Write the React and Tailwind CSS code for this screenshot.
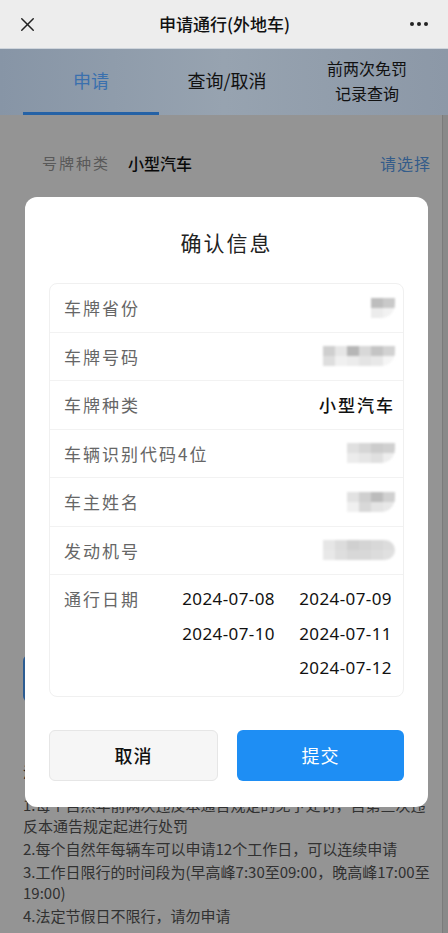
import { X } from "lucide-react";

const font = { fontFamily: '"Noto Sans CJK SC", "Noto Sans", sans-serif' };

const Mosaic = ({ top, bottom, round }) => (
  <div className={`flex flex-col blur-[1.2px] overflow-hidden ${round ? "rounded-r-full" : "rounded-br-[14px]"}`}>
    <div className="flex">
      {top.map((c, i) => (
        <div key={i} className="h-[10px] w-[12px]" style={{ backgroundColor: c }} />
      ))}
    </div>
    <div className="flex">
      {bottom.map((c, i) => (
        <div key={i} className="h-[10px] w-[12px]" style={{ backgroundColor: c }} />
      ))}
    </div>
  </div>
);

const rows = [
  {
    label: "车牌省份",
    mosaic: { top: ["#bdbdbd", "#c9c9c9"], bottom: ["#ececec", "#f2f2f2"] },
  },
  {
    label: "车牌号码",
    mosaic: {
      top: ["#cfcfcf", "#e6e6e6", "#b6b6b6", "#d8d8d8", "#c4c4c4", "#d2d2d2"],
      bottom: ["#dedede", "#f0f0f0", "#ececec", "#e4e4e4", "#e8e8e8", "#f5f5f5"],
    },
  },
  { label: "车牌种类", value: "小型汽车" },
  {
    label: "车辆识别代码4位",
    mosaic: {
      top: ["#e0e0e0", "#d6d6d6", "#cccccc", "#d0d0d0"],
      bottom: ["#ececec", "#e6e6e6", "#e0e0e0", "#eeeeee"],
    },
  },
  {
    label: "车主姓名",
    mosaic: {
      top: ["#e2e2e2", "#cfcfcf", "#bcbcbc", "#d0d0d0"],
      bottom: ["#f0f0f0", "#d8d8d8", "#e4e4e4", "#e8e8e8"],
    },
  },
  {
    label: "发动机号",
    round: true,
    mosaic: {
      top: ["#e6e6e6", "#dcdcdc", "#d0d0d0", "#d4d4d4", "#d8d8d8", "#dcdcdc"],
      bottom: ["#e8e8e8", "#dedede", "#d8d8d8", "#d8d8d8", "#dcdcdc", "#e0e0e0"],
    },
  },
];

const dates = ["2024-07-08", "2024-07-09", "2024-07-10", "2024-07-11", "2024-07-12"];

const notes = [
  "1.每个自然年前两次违反本通告规定的免予处罚，自第三次违反本通告规定起进行处罚",
  "2.每个自然年每辆车可以申请12个工作日，可以连续申请",
  "3.工作日限行的时间段为(早高峰7:30至09:00，晚高峰17:00至19:00)",
  "4.法定节假日不限行，请勿申请",
];

const ConfirmModal = () => (
  <div className="fixed left-[25px] top-[197px] z-10 w-[403px] rounded-[12px] bg-white px-6 pb-[26px] pt-[30px]">
    <h2 className="text-center text-[21px] leading-[30px] tracking-[2px] text-[#222]">确认信息</h2>
    <div className="mt-[26px] rounded-[8px] border border-[#f0f0f0]">
      {rows.map((r) => (
        <div
          key={r.label}
          className="flex h-[48.5px] items-center justify-between border-b border-[#f2f2f2] pl-[14px] pr-[8px]"
        >
          <span className="text-[17px] tracking-[2px] text-[#666]">{r.label}</span>
          {r.value ? (
            <span className="text-[17px] font-medium tracking-[2px] text-[#111]">{r.value}</span>
          ) : (
            <Mosaic {...r.mosaic} round={r.round} />
          )}
        </div>
      ))}
      {/* dates */}
      <div className="flex justify-between pb-[10px] pl-[14px] pr-[11px] pt-[7px]">
        <span className="text-[17px] leading-[34.5px] tracking-[2px] text-[#666]">通行日期</span>
        <div
          className="grid grid-cols-[94px_94px] gap-x-[23px] text-right text-[17px] leading-[34.5px] tracking-[0.4px] text-[#111]"
          style={{ fontFamily: '"Noto Sans", "Open Sans", sans-serif' }}
        >
          {dates.map((d, i) => (
            <span key={d} className={i === 4 ? "col-start-2" : ""}>
              {d}
            </span>
          ))}
        </div>
      </div>
    </div>
    <div className="mt-[33px] flex gap-[19px]">
      <button className="h-[51px] flex-1 rounded-[6px] border border-[#e6e6e6] bg-[#f6f6f6] text-[18px] font-medium tracking-[1px] text-[#111]">
        取消
      </button>
      <button className="h-[51px] flex-1 rounded-[6px] bg-[#1e8ef4] text-[18px] tracking-[1px] text-white">
        提交
      </button>
    </div>
  </div>
);

export default function App() {
  return (
    <div className="flex min-h-[933px] flex-col bg-white" style={font}>
      {/* top bar */}
      <div className="flex h-12 items-center justify-between bg-[#ededed] px-[16px]">
        <X size={23} strokeWidth={1.5} className="text-[#222]" />
        <span className="text-[17px] font-medium text-[#111]">申请通行(外地车)</span>
        <div className="flex gap-[3px] pr-[4px]">
          <span className="h-[4px] w-[4px] rounded-full bg-[#222]" />
          <span className="h-[4px] w-[4px] rounded-full bg-[#222]" />
          <span className="h-[4px] w-[4px] rounded-full bg-[#222]" />
        </div>
      </div>

      {/* tabs */}
      <div className="grid h-[67px] grid-cols-3 border-t border-[#cfd5dc] bg-gradient-to-r from-[#8795a6] via-[#97a3b0] to-[#8c98a7] pl-[23px] pr-[17px]">
        <div className="flex flex-col">
          <div className="flex flex-1 items-center justify-center text-[18px] text-[#3a70ae]">申请</div>
          <div className="h-[3px] bg-[#2562a6]" />
        </div>
        <div className="flex items-center justify-center pb-[3px] text-[18px] text-[#111]">查询/取消</div>
        <div className="flex flex-col items-center justify-center pb-[3px] pl-[8px] text-[16px] leading-[25px] text-[#111]">
          <span>前两次免罚</span>
          <span>记录查询</span>
        </div>
      </div>

      {/* content under mask */}
      <div className="relative flex flex-1">
        <div className="flex-1 pb-4 pt-[24px]">
          <div className="flex h-12 items-center pl-[42px] pr-[11px]">
            <span className="w-[86px] text-[15px] tracking-[2px] text-[#999]">号牌种类</span>
            <span className="flex-1 text-[16px] font-medium text-[#111]">小型汽车</span>
            <span className="text-[16px] tracking-[1px] text-[#5b9fee]">请选择</span>
          </div>
          {/* remaining form fields, covered by the dialog */}
          <div className="h-[240px]" />
          <div className="mx-[23px] mt-[228px] h-[47px] rounded-[6px] bg-[#4d9ffc]" />
          <div className="pl-[23px] pr-[10px]">
            <p className="mt-[59px] text-[15px] leading-[21px] text-[#333]">温馨提示：</p>
            <div className="mt-[12px] space-y-[2px] text-[15px] leading-[21px] text-[#555]">
              {notes.map((n) => (
                <p key={n}>{n}</p>
              ))}
            </div>
          </div>
        </div>
        <div className="w-[6px] border-l border-[#d4d4d4] bg-[#ececec]" />
        <div className="absolute inset-0 bg-black/[0.42]" />
      </div>

      <ConfirmModal />
    </div>
  );
}
